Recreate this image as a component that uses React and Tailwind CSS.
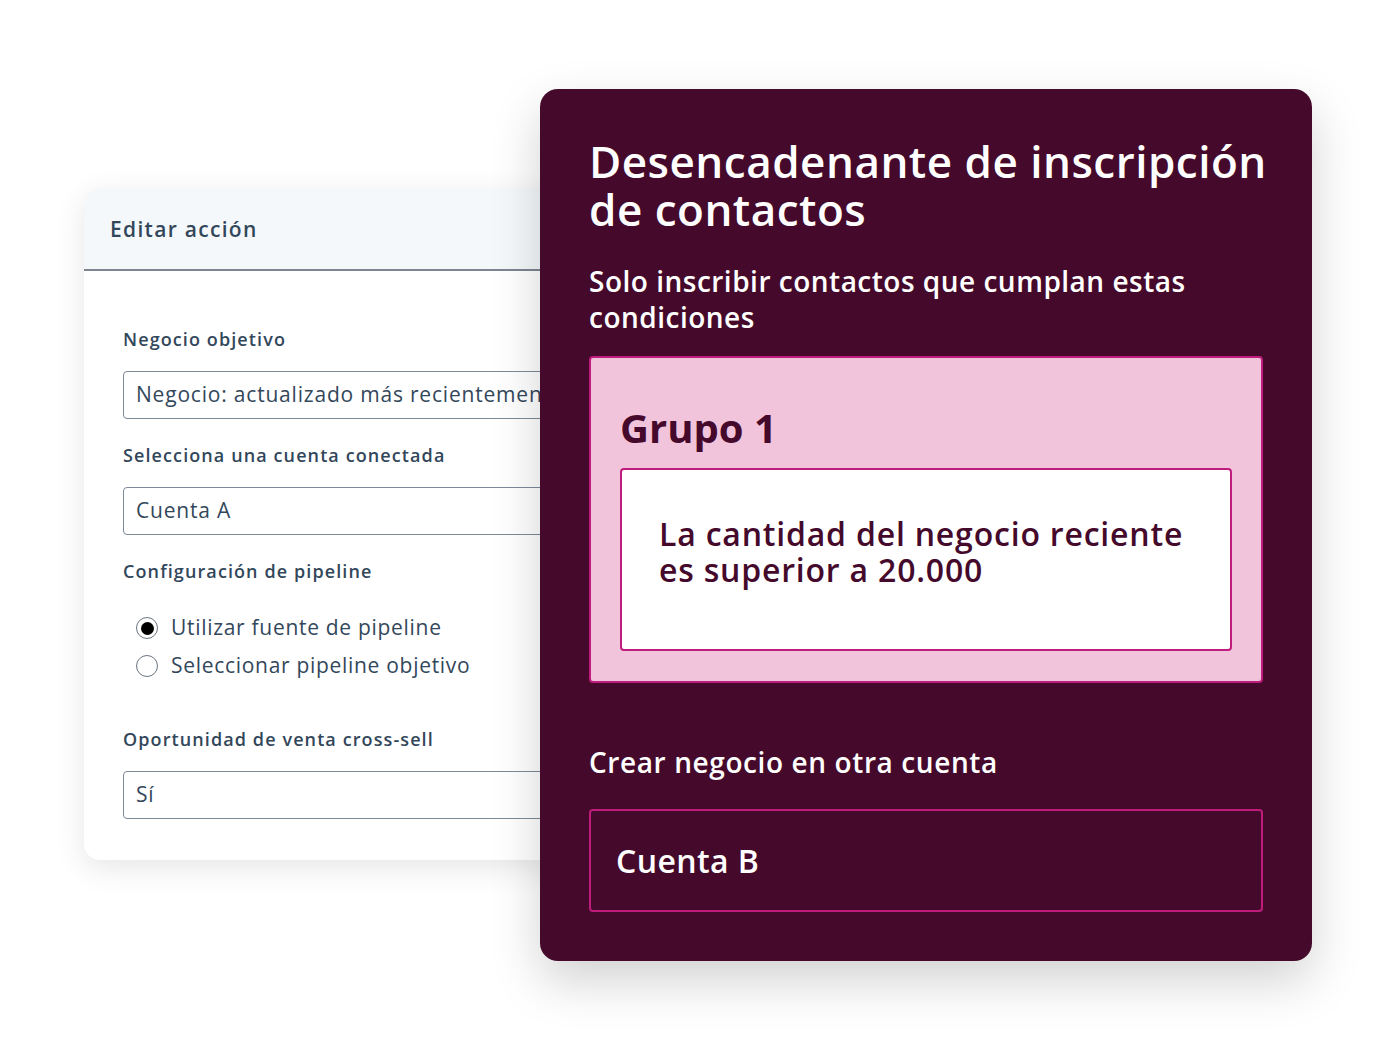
import React from 'react';

const font = { fontFamily: '"Open Sans", "Noto Sans", sans-serif' };

const Field = ({ label, value, className = '' }) => (
  <div className={className}>
    <div className="text-[18px] font-semibold text-[#33475b] leading-[24px] tracking-[1.1px]">{label}</div>
    <div className="mt-[20px] h-[48px] border border-[#7c8a99] rounded-[4px] bg-white flex items-center pl-[12px] text-[21px] text-[#33475b] tracking-[0.8px] whitespace-nowrap overflow-hidden">
      {value}
    </div>
  </div>
);

const Radio = ({ checked, label }) => (
  <div className="flex items-center gap-[13px] h-[38px]">
    <span className="w-[22px] h-[22px] rounded-full border-[1.5px] border-[#6b7580] flex items-center justify-center bg-white">
      {checked && <span className="w-[13px] h-[13px] rounded-full bg-black" />}
    </span>
    <span className="text-[21px] text-[#33475b] tracking-[0.7px]">{label}</span>
  </div>
);

const EditCard = () => (
  <div className="w-[490px] mt-[99px] h-[672px] shrink-0 rounded-[16px] bg-white shadow-[0_8px_30px_rgba(0,0,0,0.10)] overflow-hidden">
    <div className="h-[83px] bg-[#f5f8fa] border-b-2 border-[#7c8590] flex items-center pl-[26px] pt-[3px]">
      <span className="text-[21px] font-semibold text-[#33475b] tracking-[1.3px]">Editar acción</span>
    </div>
    <div className="pl-[39px] pt-[56px]">
      <Field label="Negocio objetivo" value="Negocio: actualizado más recientemente" />
      <Field className="mt-[24px]" label="Selecciona una cuenta conectada" value="Cuenta A" />
      <div className="mt-[24px] text-[18px] font-semibold text-[#33475b] leading-[24px] tracking-[1.1px]">Configuración de pipeline</div>
      <div className="mt-[26px] pl-[13px]">
        <Radio checked label="Utilizar fuente de pipeline" />
        <Radio label="Seleccionar pipeline objetivo" />
      </div>
      <Field className="mt-[42px]" label="Oportunidad de venta cross-sell" value="Sí" />
    </div>
  </div>
);

const TriggerCard = () => (
  <div className="relative z-10 -ml-[34px] w-[772px] h-[872px] shrink-0 rounded-[18px] bg-[#450a2b] shadow-[0_20px_50px_rgba(0,0,0,0.18)] pl-[49px] pr-[49px] pt-[48px]">
    <h1 className="text-[44px] leading-[48px] font-semibold text-white tracking-[0.5px] whitespace-nowrap">
      Desencadenante de inscripción
      <br />
      de contactos
    </h1>
    <p className="mt-[30px] text-[28px] leading-[36px] font-semibold text-white pr-[40px] tracking-[0.5px]">
      Solo inscribir contactos que cumplan estas condiciones
    </p>
    <div className="mt-[21px] h-[327px] bg-[#f2c4dc] border-2 border-[#c01c7d] rounded-[4px] pl-[29px] pr-[29px] pt-[44px]">
      <div className="text-[40px] leading-[52px] font-bold text-[#450a2b]">Grupo 1</div>
      <div className="mt-[14px] h-[183px] bg-white border-2 border-[#c01c7d] rounded-[4px] pl-[37px] pt-[46px]">
        <p className="text-[32px] leading-[36px] font-semibold text-[#450a2b] pr-[20px] tracking-[0.8px]">
          La cantidad del negocio reciente es superior a 20.000
        </p>
      </div>
    </div>
    <div className="mt-[61px] text-[28px] leading-[36px] font-semibold text-white tracking-[0.6px]">Crear negocio en otra cuenta</div>
    <div className="mt-[29px] h-[103px] border-2 border-[#c01c7d] rounded-[4px] flex items-center pl-[25px]">
      <span className="text-[32px] font-semibold text-white tracking-[0.4px]">Cuenta B</span>
    </div>
  </div>
);

export default function App() {
  return (
    <div className="w-[1396px] h-[1050px] bg-white" style={font}>
      <div className="flex items-start pt-[89px] pl-[84px]">
        <EditCard />
        <TriggerCard />
      </div>
    </div>
  );
}
